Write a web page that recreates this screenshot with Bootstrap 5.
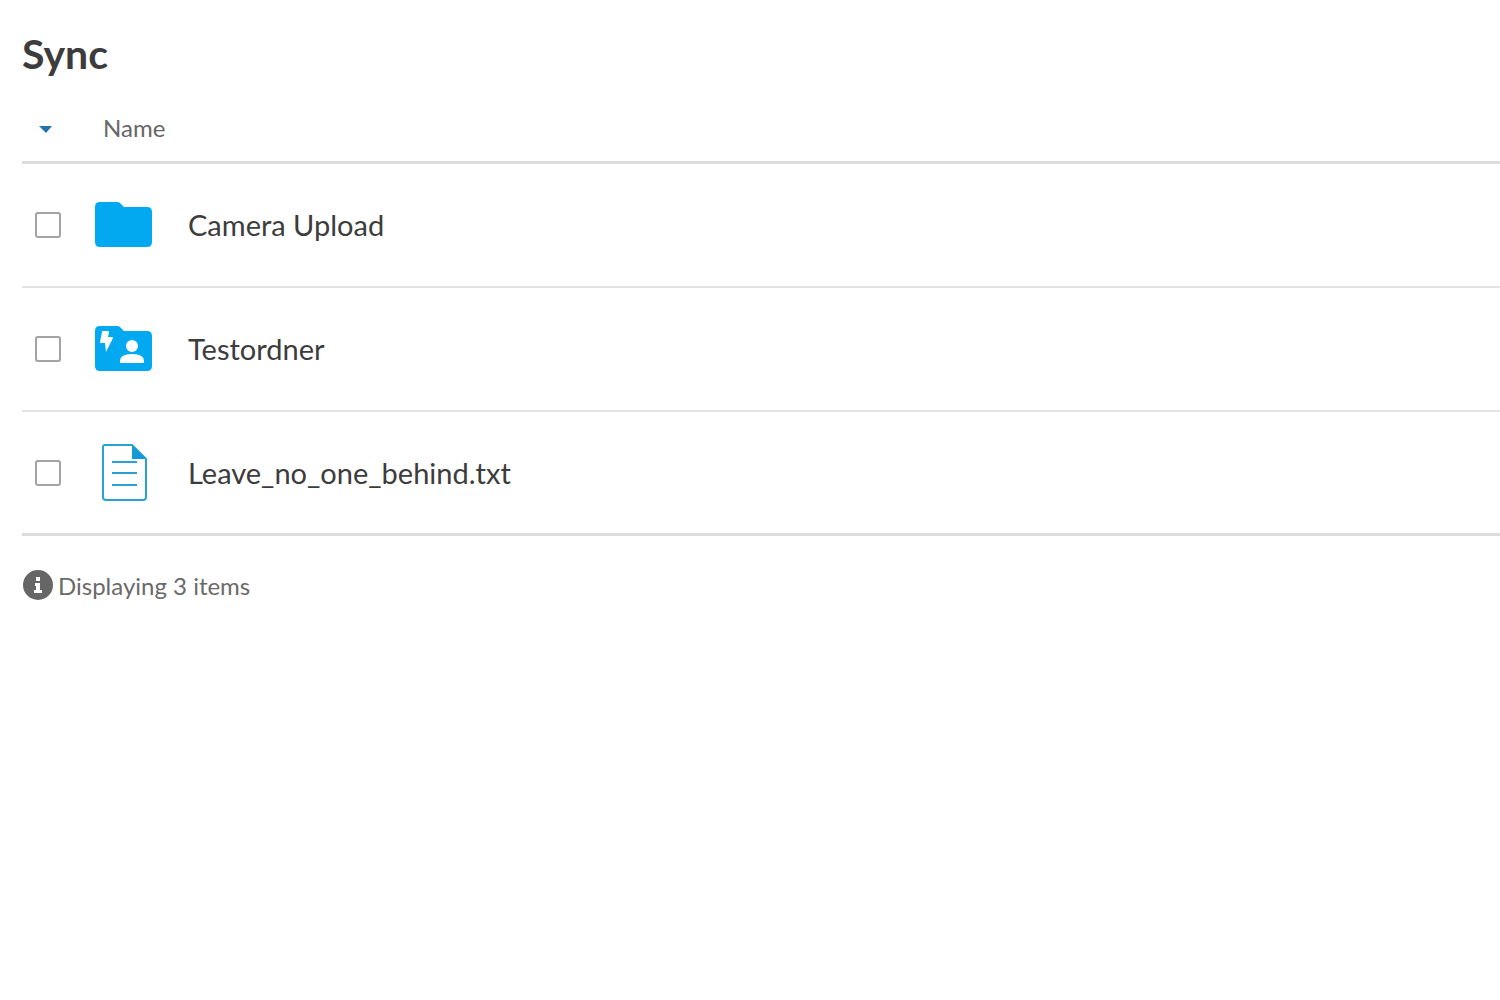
<!DOCTYPE html>
<html lang="en">
<head>
<meta charset="utf-8">
<meta name="viewport" content="width=device-width, initial-scale=1">
<title>Sync</title>
<link href="https://cdn.jsdelivr.net/npm/bootstrap@5.3.0/dist/css/bootstrap.min.css" rel="stylesheet">
<style>
  body { font-family: Lato, "Liberation Sans", sans-serif; color: #3c3c3c; }
  .files-page { padding: 29px 0 0 22px; }
  .page-title { font-size: 41px; line-height: 50px; font-weight: 700; }
  .file-table { border-collapse: separate; border-spacing: 0; font-size: 29px; line-height: 40px; color: #3c3c3c; }
  .file-table th { height: 69px; padding: 0; font-size: 24px; font-weight: 400; color: #666; border-bottom: 3px solid #dcdcdc; }
  .file-table td { height: 124px; padding: 0; border-bottom: 2px solid #e3e3e3; }
  .file-table tbody tr:last-child td { border-bottom: 3px solid #dcdcdc; }
  .file-table .name-head { padding-left: 9px; }
  .check-col { width: 72px; }
  .icon-col { width: 94px; }
  .file-table .check-cell { padding-left: 13px; }
  .file-check.form-check-input { width: 26px; height: 26px; margin: 0; border: 2px solid #a3a3a3; border-radius: 3px; }
  .sort-btn { padding: 12px 17px 8px; line-height: 0; }
  .list-status { gap: 4px; margin-top: 30px; font-size: 24px; line-height: 40px; color: #6a6a6a; }
</style>
</head>
<body class="bg-white">
<main class="files-page">
  <h1 class="page-title mb-3">Sync</h1>
  <table class="file-table w-100 align-middle">
    <colgroup><col class="check-col"><col class="icon-col"><col></colgroup>
    <thead>
      <tr>
        <th scope="col">
          <button type="button" class="sort-btn btn border-0 d-block" aria-label="Sort and select">
            <svg width="14" height="8" viewBox="0 0 14 8" aria-hidden="true"><path d="M0 0h13L7 7z" fill="#2374ab"/></svg>
          </button>
        </th>
        <th scope="col" colspan="2" class="name-head">Name</th>
      </tr>
    </thead>
    <tbody>
      <tr>
        <td class="check-cell"><input class="file-check form-check-input d-block" type="checkbox" id="file-1"></td>
        <td>
          <svg class="d-block" width="60" height="60" viewBox="0 0 60 60" aria-hidden="true">
            <path d="M6 7h17q2 0 3 1l4 4h23q5 0 5 5v30q0 5-5 5H6q-5 0-5-5V12q0-5 5-5z" fill="#03a9f0"/>
          </svg>
        </td>
        <td><label for="file-1">Camera Upload</label></td>
      </tr>
      <tr>
        <td class="check-cell"><input class="file-check form-check-input d-block" type="checkbox" id="file-2"></td>
        <td>
          <svg class="d-block" width="60" height="60" viewBox="0 0 60 60" aria-hidden="true">
            <path d="M6 7h17q2 0 3 1l4 4h23q5 0 5 5v30q0 5-5 5H6q-5 0-5-5V12q0-5 5-5z" fill="#03a9f0"/>
            <path d="M8 13q0-1 1-1h5q1 0 1 1l-1 5h4q1 0 1 1l-7 14-1-9H7q-1 0-1-1z" fill="#fff"/>
            <circle cx="38" cy="27" r="6" fill="#fff"/>
            <path d="M26 44v-2q0-7 12-7t12 7v2z" fill="#fff"/>
          </svg>
        </td>
        <td><label for="file-2">Testordner</label></td>
      </tr>
      <tr>
        <td class="check-cell"><input class="file-check form-check-input d-block" type="checkbox" id="file-3"></td>
        <td>
          <svg class="d-block" width="60" height="60" viewBox="0 0 60 60" aria-hidden="true">
            <path d="M11 2h27l14 14v38q0 3-3 3H12q-3 0-3-3V4q0-2 2-2z" fill="#fff" stroke="#27a2d3" stroke-width="2"/>
            <path d="M38 2v14h14z" fill="#149bd7"/>
            <path d="M18 19h25M18 30h25M18 42h25" stroke="#27a2d3" stroke-width="2"/>
          </svg>
        </td>
        <td><label for="file-3">Leave_no_one_behind.txt</label></td>
      </tr>
    </tbody>
  </table>
  <div class="list-status d-flex align-items-center">
    <svg width="32" height="32" viewBox="0 0 32 32" aria-hidden="true">
      <circle cx="16" cy="15" r="15" fill="#666"/>
      <path d="M14 7h4v4h-4zM13 13h5v7h2v3h-8v-3h2v-4h-1z" fill="#fff"/>
    </svg>
    <span>Displaying 3 items</span>
  </div>
</main>
<script src="https://cdn.jsdelivr.net/npm/bootstrap@5.3.0/dist/js/bootstrap.bundle.min.js"></script>
</body>
</html>
